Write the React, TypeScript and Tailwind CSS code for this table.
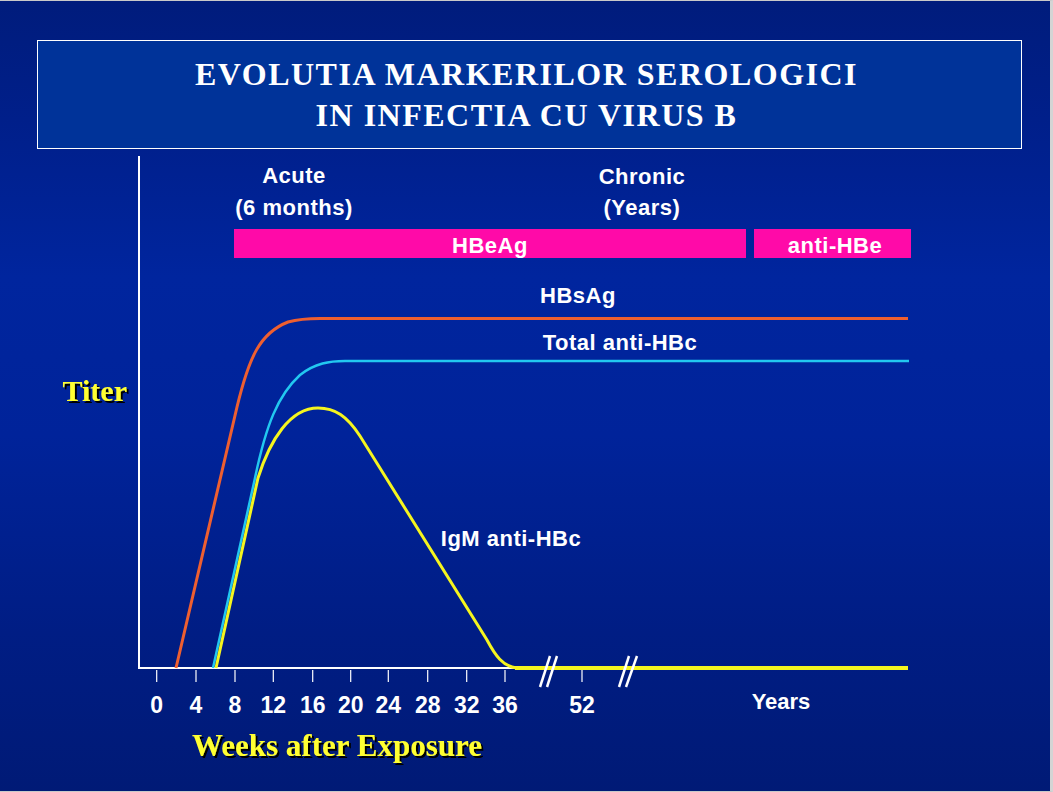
const ticks = [
  { x: 156.7, label: "0" },
  { x: 196, label: "4" },
  { x: 235, label: "8" },
  { x: 273.3, label: "12" },
  { x: 312.7, label: "16" },
  { x: 350.7, label: "20" },
  { x: 388.3, label: "24" },
  { x: 427.7, label: "28" },
  { x: 466.7, label: "32" },
  { x: 505, label: "36" },
  { x: 582, label: "52" },
];

// chart is a drawing: plot in page coordinates (viewBox starts below the title box)
const Chart = () => (
  <svg width="1050" height="642" viewBox="0 149 1050 642" className="block">
    <defs>
      <filter id="shadow" x="-10%" y="-10%" width="130%" height="140%">
        <feDropShadow dx="2" dy="2" stdDeviation="0" floodColor="#000" floodOpacity="1" />
      </filter>
    </defs>

    <g
      fill="#fff"
      textAnchor="middle"
      className="font-['Liberation_Sans',Arial,sans-serif] font-bold text-[22px] tracking-[0.5px]"
    >
      <text x="294" y="183">Acute</text>
      <text x="294" y="215">(6 months)</text>
      <text x="642" y="184">Chronic</text>
      <text x="642" y="215">(Years)</text>
    </g>

    <rect x="234" y="229" width="512" height="29" fill="#ff0aa8" />
    <rect x="754" y="229" width="157" height="29" fill="#ff0aa8" />
    <g
      fill="#fff"
      textAnchor="middle"
      className="font-['Liberation_Sans',Arial,sans-serif] font-bold text-[22px] tracking-[0.5px]"
    >
      <text x="490" y="253">HBeAg</text>
      <text x="835" y="253">anti-HBe</text>
      <text x="578" y="303">HBsAg</text>
      <text x="620" y="350">Total anti-HBc</text>
      <text x="511" y="546">IgM anti-HBc</text>
    </g>

    {/* axes */}
    <line x1="139" y1="156" x2="139" y2="669" stroke="#fff" strokeWidth="2" />
    <line x1="138" y1="668" x2="520" y2="668" stroke="#fff" strokeWidth="2" />
    {ticks.map((t) => (
      <line key={t.label} x1={t.x} y1="670" x2={t.x} y2="682" stroke="#fff" strokeWidth="1.2" />
    ))}

    {/* HBsAg */}
    <path
      d="M176,668 L237,407 C249,357 260,333 288,322 C299,319 310,318.5 320,318.5 L908,318.5"
      fill="none"
      stroke="#ee5f30"
      strokeWidth="3"
    />
    {/* Total anti-HBc */}
    <path
      d="M213,668 L255,478 C266,425 278,395 300,375 C315,363 330,361 345,361 L909,361"
      fill="none"
      stroke="#22c8f0"
      strokeWidth="2.5"
    />
    {/* IgM anti-HBc */}
    <path
      d="M216,668 L258,478 C270,440 290,408 318,408 C335,408 347,416 360,436 L487,640 C495,655 503,667 517,668"
      fill="none"
      stroke="#f5f51e"
      strokeWidth="3"
    />
    <line x1="515" y1="668" x2="908" y2="668" stroke="#f5f51e" strokeWidth="4" />

    {/* axis breaks */}
    <g stroke="#fff" strokeWidth="2.5">
      <line x1="540" y1="687" x2="550" y2="656" />
      <line x1="547" y1="687" x2="557" y2="656" />
      <line x1="619" y1="687" x2="629" y2="656" />
      <line x1="626" y1="687" x2="637" y2="656" />
    </g>

    <g
      fill="#fff"
      textAnchor="middle"
      className="font-['Liberation_Sans',Arial,sans-serif] font-bold text-[23px]"
    >
      {ticks.map((t) => (
        <text key={t.label} x={t.x} y="713">
          {t.label}
        </text>
      ))}
      <text x="781" y="709" className="text-[22px]">Years</text>
    </g>

    <g
      fill="#ffff33"
      filter="url(#shadow)"
      className="font-['Liberation_Serif','Times_New_Roman',serif] font-bold text-[30px]"
    >
      <text x="127" y="401" textAnchor="end">Titer</text>
      <text x="192" y="756" className="text-[31px]">Weeks after Exposure</text>
    </g>
  </svg>
);

export default function App() {
  return (
    <div className="w-[1053px] h-[792px] box-border overflow-hidden border-t border-t-[#c9c9c9] border-r-[3px] border-r-[#d4d4d4] border-b border-b-[#c9c9c9] bg-[linear-gradient(to_bottom,#001c7c_0%,#001f8a_15%,#00259e_35%,#00239a_55%,#001d84_80%,#001a76_100%)]">
      <div className="mt-[39px] ml-[37px] w-[985px] h-[109px] box-border border border-white bg-[#003399] flex flex-col items-center justify-center">
        <h1 className="-ml-[6px] font-['Liberation_Serif','Times_New_Roman',serif] font-bold text-white text-[32px] leading-[41px] tracking-[1.5px] text-center">
          EVOLUTIA MARKERILOR SEROLOGICI
          <br />
          IN INFECTIA CU VIRUS B
        </h1>
      </div>
      <Chart />
    </div>
  );
}
